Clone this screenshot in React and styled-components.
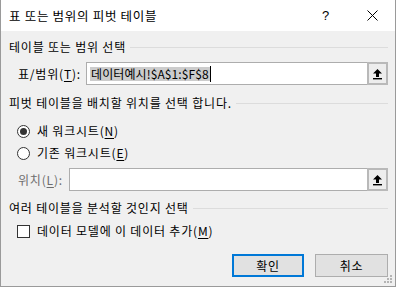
import React from 'react'
import styled, { createGlobalStyle } from 'styled-components'

const GlobalStyle = createGlobalStyle`
  html, body {
    margin: 0;
    padding: 0;
    background: #f0f0f0;
  }
  body {
    font-family: 'Noto Sans CJK KR', 'Noto Sans', sans-serif;
    font-size: 12px;
    letter-spacing: 0.8px;
    color: #000;
  }
`

const Window = styled.div`
  position: relative;
  width: 396px;
  height: 287px;
  box-sizing: border-box;
  border: 1px solid #9a9a9a;
  border-top: none;
  background: #f0f0f0;
  display: flex;
  flex-direction: column;
`

const TitleBar = styled.div`
  height: 31px;
  background: #fff;
  display: flex;
  align-items: center;
  padding-left: 8px;
  flex-shrink: 0;
`

const TitleText = styled.div`
  flex: 1;
  font-size: 12.5px;
  letter-spacing: 0.7px;
  line-height: 16px;
  padding-top: 1px;
`

const TitleButton = styled.div`
  width: 46px;
  height: 31px;
  display: flex;
  align-items: center;
  justify-content: center;
  font-family: 'Liberation Sans', sans-serif;
  font-size: 13px;
`

const Body = styled.div`
  padding: 0 7px 0 8px;
  display: flex;
  flex-direction: column;
`

const Heading = styled.div`
  display: flex;
  align-items: center;
  height: 16px;
  line-height: 16px;
  margin-top: ${(p) => p.$top}px;
  white-space: nowrap;
  &::after {
    content: '';
    flex: 1;
    height: 1px;
    background: #dcdcdc;
    margin-left: 4px;
  }
`

const FieldRow = styled.div`
  display: flex;
  align-items: center;
  height: 23px;
  margin-top: 7px;
  padding-left: ${(p) => p.$indent}px;
`

const Label = styled.div`
  width: ${(p) => p.$width}px;
  color: ${(p) => (p.$disabled ? '#6d6d6d' : '#000')};
  line-height: 16px;
  white-space: nowrap;
`

const Field = styled.div`
  flex: 1;
  height: 23px;
  box-sizing: border-box;
  border: 1px solid #adadad;
  background: #fff;
  display: flex;
  align-items: center;
`

const FieldText = styled.div`
  flex: 1;
  padding-left: 3px;
  display: flex;
  align-items: center;
`

const Selected = styled.span`
  background: #cccccc;
  line-height: 14px;
  padding: 0 1px;
  letter-spacing: 0.1px;
`

const Caret = styled.span`
  width: 1px;
  height: 16px;
  background: #000;
`

const PickButton = styled.div`
  width: 21px;
  height: 23px;
  box-sizing: border-box;
  margin: -1px -1px -1px 0;
  border: 2px solid #b9b9b9;
  background: #ededed;
  display: flex;
  align-items: center;
  justify-content: center;
`

const OptionRow = styled.label`
  display: flex;
  align-items: center;
  height: 16px;
  margin-top: ${(p) => p.$top}px;
  padding-left: 8px;
  line-height: 16px;
`

const Radio = styled.span`
  width: 13px;
  height: 13px;
  box-sizing: border-box;
  border: 1px solid #333;
  border-radius: 50%;
  background: #fff;
  display: flex;
  align-items: center;
  justify-content: center;
  margin-right: 7px;
  &::after {
    content: '';
    width: 7px;
    height: 7px;
    border-radius: 50%;
    background: ${(p) => (p.$checked ? '#333' : 'transparent')};
  }
`

const Check = styled.span`
  width: 13px;
  height: 13px;
  box-sizing: border-box;
  border: 1px solid #333;
  background: #fff;
  margin-right: 7px;
`

const Key = styled.span`
  text-decoration: underline;
  text-underline-offset: 2px;
`

const Buttons = styled.div`
  display: flex;
  justify-content: flex-end;
  gap: 11px;
  margin-top: 15px;
`

const Button = styled.button`
  width: ${(p) => p.$w}px;
  height: 23px;
  box-sizing: border-box;
  background: #e1e1e1;
  border: ${(p) => (p.$default ? '2px solid #0078d7' : '1px solid #adadad')};
  font-family: 'Noto Sans CJK KR', sans-serif;
  font-size: 12px;
  letter-spacing: 0.8px;
  color: #000;
  padding: 0;
  line-height: 16px;
`

const Grip = styled.svg`
  position: absolute;
  right: 2px;
  bottom: 2px;
`

const UpArrow = () => (
  <svg width="11" height="12" viewBox="0 0 11 12">
    <polygon points="5.5,1 10,5.5 7,5.5 7,9 4,9 4,5.5 1,5.5" fill="#000" />
    <rect x="1" y="10" width="9" height="1.4" fill="#000" />
  </svg>
)

const App = () => (
  <>
    <GlobalStyle />
    <Window>
      <TitleBar>
        <TitleText>표 또는 범위의 피벗 테이블</TitleText>
        <TitleButton>?</TitleButton>
        <TitleButton>
          <svg width="11" height="11" viewBox="0 0 11 11">
            <path d="M0.5 0.5 L10.5 10.5 M10.5 0.5 L0.5 10.5" stroke="#000" strokeWidth="1" />
          </svg>
        </TitleButton>
      </TitleBar>
      <Body>
        <Heading $top={8}>테이블 또는 범위 선택</Heading>
        <FieldRow $indent={9}>
          <Label $width={68}>
            표/범위(<Key>T</Key>):
          </Label>
          <Field>
            <FieldText>
              <Selected>데이터예시!$A$1:$F$8</Selected>
              <Caret />
            </FieldText>
            <PickButton>
              <UpArrow />
            </PickButton>
          </Field>
        </FieldRow>

        <Heading $top={10}>피벗 테이블을 배치할 위치를 선택 합니다.</Heading>
        <OptionRow $top={12}>
          <Radio $checked />
          새 워크시트(<Key>N</Key>)
        </OptionRow>
        <OptionRow $top={6}>
          <Radio />
          기존 워크시트(<Key>E</Key>)
        </OptionRow>
        <FieldRow $indent={9}>
          <Label $width={51} $disabled>
            위치(<Key>L</Key>):
          </Label>
          <Field>
            <FieldText />
            <PickButton>
              <UpArrow />
            </PickButton>
          </Field>
        </FieldRow>

        <Heading $top={9}>여러 테이블을 분석할 것인지 선택</Heading>
        <OptionRow $top={7}>
          <Check />
          데이터 모델에 이 데이터 추가(<Key>M</Key>)
        </OptionRow>

        <Buttons>
          <Button $w={72} $default>
            확인
          </Button>
          <Button $w={73}>취소</Button>
        </Buttons>
      </Body>
      <Grip width="9" height="9" viewBox="0 0 9 9">
        <rect x="6" y="0" width="2" height="2" fill="#b4b4b4" />
        <rect x="3" y="3" width="2" height="2" fill="#b4b4b4" />
        <rect x="6" y="3" width="2" height="2" fill="#b4b4b4" />
        <rect x="0" y="6" width="2" height="2" fill="#b4b4b4" />
        <rect x="3" y="6" width="2" height="2" fill="#b4b4b4" />
        <rect x="6" y="6" width="2" height="2" fill="#b4b4b4" />
      </Grip>
    </Window>
  </>
)

export default App
